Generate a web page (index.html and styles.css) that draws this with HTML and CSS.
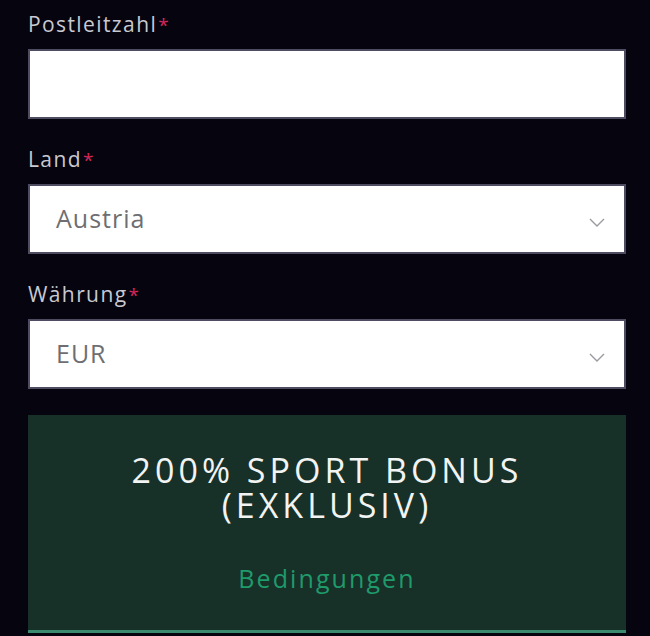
FILE: index.html
```html
<!DOCTYPE html>
<html lang="de">
<head>
<meta charset="utf-8">
<title>Registrierung</title>
<link rel="stylesheet" href="styles.css">
</head>
<body>
<div class="form">
  <div class="field">
    <label class="label">Postleitzahl<span class="req">*</span></label>
    <div class="input"></div>
  </div>
  <div class="field">
    <label class="label">Land<span class="req">*</span></label>
    <div class="input select">
      <span class="value">Austria</span>
      <svg class="chev" width="16" height="9" viewBox="0 0 16 9"><path d="M1 1 L8 8 L15 1" fill="none" stroke="#9a9aa0" stroke-width="1.4"/></svg>
    </div>
  </div>
  <div class="field">
    <label class="label">Währung<span class="req">*</span></label>
    <div class="input select">
      <span class="value">EUR</span>
      <svg class="chev" width="16" height="9" viewBox="0 0 16 9"><path d="M1 1 L8 8 L15 1" fill="none" stroke="#9a9aa0" stroke-width="1.4"/></svg>
    </div>
  </div>
  <div class="bonus">
    <div class="bonus-title">
      <span class="line">200% SPORT BONUS</span>
      <span class="line">(EXKLUSIV)</span>
    </div>
    <div class="bonus-link">Bedingungen</div>
  </div>
</div>
</body>
</html>
```
FILE: styles.css
```css
html, body {
  margin: 0;
  padding: 0;
  background: #05040f;
  height: 100%;
  overflow: hidden;
}
body {
  font-family: "Open Sans", "DejaVu Sans", sans-serif;
}
.form {
  width: 598px;
  padding: 10px 0 0 28px;
  display: flex;
  flex-direction: column;
}
.field {
  display: flex;
  flex-direction: column;
  gap: 11px;
  margin-bottom: 26px;
}
.field:last-of-type {
  margin-bottom: 27px;
}
.label {
  display: block;
  height: 28px;
  font-size: 21px;
  line-height: 28px;
  color: #c9c9d1;
  letter-spacing: 1.4px;
}
.req {
  color: #d4275b;
  margin-left: 1px;
  font-size: 19px;
  line-height: 0;
}
.input {
  box-sizing: border-box;
  height: 70px;
  background: #ffffff;
  border: 2px solid #4d4c60;
}
.select {
  display: flex;
  align-items: center;
  justify-content: space-between;
  padding: 0 19px 0 26px;
}
.value {
  font-size: 25px;
  color: #6e6e72;
  letter-spacing: 1px;
  margin-top: -2px;
}
.chev {
  margin-top: 7px;
}
.bonus {
  box-sizing: border-box;
  height: 218px;
  background: #173028;
  border-bottom: 3px solid #3a8a6f;
  display: flex;
  flex-direction: column;
  align-items: center;
  padding-top: 38px;
}
.bonus-title {
  display: flex;
  flex-direction: column;
  align-items: center;
  font-size: 34px;
  color: #f2f4f3;
  text-align: center;
  letter-spacing: 4px;
}
.line {
  display: block;
  height: 35px;
  line-height: 35px;
}
.bonus-link {
  margin-top: 40px;
  font-size: 25px;
  line-height: 30px;
  color: #1f9a6b;
  letter-spacing: 2.1px;
}
```
